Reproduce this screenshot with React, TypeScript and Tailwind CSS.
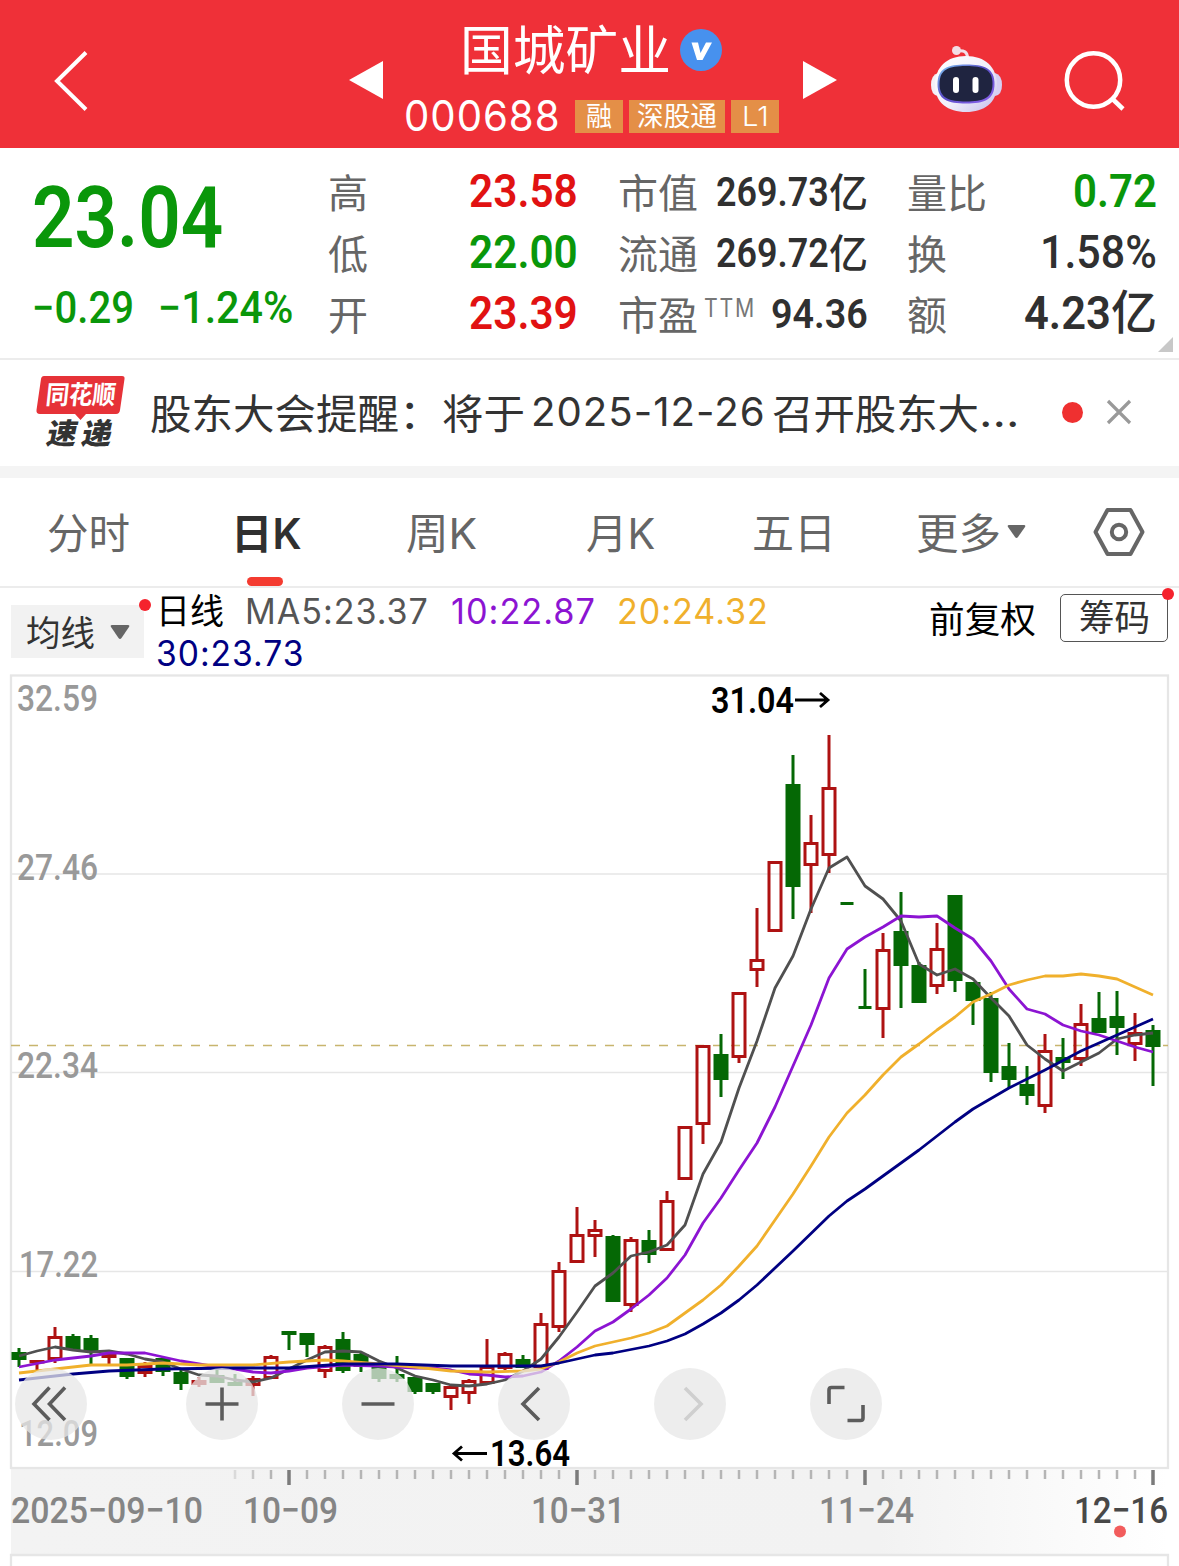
import { useLayoutEffect, useRef, type ReactNode } from "react";

const SANS = "font-[Inter,'Noto_Sans_CJK_SC',sans-serif]";
const DIN = "font-[Roboto,'Noto_Sans_CJK_SC',sans-serif]";

/* A single line of text condensed or widened to fill its box. */
function Fit({ className = "", children }: { className?: string; children: ReactNode }) {
  const box = useRef<HTMLDivElement>(null);
  const text = useRef<HTMLSpanElement>(null);
  useLayoutEffect(() => {
    const apply = () => {
      if (box.current && text.current) {
        text.current.style.transform = `scaleX(${box.current.clientWidth / text.current.offsetWidth})`;
      }
    };
    apply();
    document.fonts.ready.then(apply);
  }, []);
  return (
    <div ref={box} className={`shrink-0 whitespace-nowrap ${className}`}>
      <span ref={text} className="inline-block origin-left">{children}</span>
    </div>
  );
}

function Header() {
  return (
    <header className="flex h-[148px] bg-[#ef3038] text-white">
      <svg className="mt-[50px] ml-[53px] h-[62px] w-[36px]" viewBox="0 0 36 62" fill="none" stroke="currentColor" strokeWidth="4">
        <path d="M33 2.500L4 31L33 59.500" />
      </svg>
      <svg className="mt-[61px] ml-[260px] h-[38px] w-[34px]" viewBox="0 0 34 38" fill="currentColor">
        <path d="M34 0V38L0 19Z" />
      </svg>
      <div className="ml-[21px] w-[375px]">
        <div className="mt-[18px] ml-[56px] flex h-[64px] items-center">
          <Fit className={`w-[211px] pt-[2px] text-[53px] leading-[64px] ${SANS}`}>国城矿业</Fit>
          <svg className="ml-[9px] size-[42px]" viewBox="0 0 42 42">
            <circle cx="21" cy="21" r="21" fill="#4791ee" />
            <path d="M11.500 13.500H18L20.500 24L26 13.500H32L22.500 31H17Z" fill="#fff" />
          </svg>
        </div>
        <div className="mt-[12px] flex h-[44px] items-center">
          <Fit className={`w-[157px] text-[42px] leading-[44px] tracking-[1px] ${SANS}`}>000688</Fit>
          <div className={`mt-[1px] ml-[14px] flex gap-[6px] text-[27px] leading-[34px] ${SANS}`}>
            <div className="flex h-[33px] w-[48px] justify-center bg-[#e48f47]"><Fit className="w-[26px]">融</Fit></div>
            <div className="flex h-[33px] w-[96px] justify-center bg-[#e48f47]"><Fit className="w-[80px]">深股通</Fit></div>
            <div className="flex h-[33px] w-[48px] justify-center bg-[#e48f47]"><Fit className="w-[27px] font-light">L1</Fit></div>
          </div>
        </div>
      </div>
      <svg className="mt-[61px] ml-[24px] h-[38px] w-[34px]" viewBox="0 0 34 38" fill="currentColor">
        <path d="M0 0V38L34 19Z" />
      </svg>
      <svg className="mt-[44px] ml-[92px] h-[70px] w-[74px]" viewBox="0 0 74 70">
        <defs>
          <linearGradient id="shell" x1="0" y1="0" x2="1" y2="1">
            <stop offset="0" stopColor="#fff" />
            <stop offset=".55" stopColor="#f1effa" />
            <stop offset="1" stopColor="#c4bdec" />
          </linearGradient>
          <linearGradient id="rim" x1="0" y1="0" x2="1" y2="1">
            <stop offset="0" stopColor="#7fc9f5" />
            <stop offset=".45" stopColor="#5a4fc8" />
            <stop offset="1" stopColor="#8d62ee" />
          </linearGradient>
        </defs>
        <path d="M28 7Q38.500 5 38.500 14V19" fill="none" stroke="#f2dfe8" strokeWidth="3" />
        <circle cx="27.500" cy="6.500" r="4.500" fill="#f3dde5" />
        <path d="M9 29Q2 31 2 41Q2 51 9 52Z" fill="#f3f0f8" />
        <path d="M66 29Q73 31 73 41Q73 51 66 52Z" fill="#d6cff3" />
        <path d="M37 12C56 12 68 23 68 41C68 59 55 68 37 68C19 68 6 59 6 41C6 23 18 12 37 12Z" fill="url(#shell)" />
        <path d="M37 20.500C55 20.500 65.500 24 65.500 40C65.500 56 55 59.500 37 59.500C19 59.500 8.500 56 8.500 40C8.500 24 19 20.500 37 20.500Z" fill="url(#rim)" />
        <path d="M37 22C54 22 63.500 25 63.500 40C63.500 54 54 57.500 37 57.500C20 57.500 10.500 54 10.500 40C10.500 25 20 22 37 22Z" fill="#1f2440" />
        <rect x="24" y="33" width="6" height="16" rx="3" fill="#fff" />
        <rect x="43.500" y="33" width="6" height="16" rx="3" fill="#fff" />
      </svg>
      <svg className="mt-[49px] ml-[60px] h-[63px] w-[64px]" viewBox="0 0 64 63" fill="none" stroke="currentColor" strokeWidth="4.500">
        <circle cx="30.500" cy="31" r="26.700" />
        <path d="M48.500 49L60 60" />
      </svg>
    </header>
  );
}

function Label({ children, className }: { children: ReactNode; className: string }) {
  return <Fit className={`pt-[1.5px] text-[40px] leading-[61px] font-normal text-[#666] ${SANS} ${className}`}>{children}</Fit>;
}

function Quote() {
  return (
    <section className={`relative flex h-[212px] border-b-2 border-[#ececec] pt-[13px] ${DIN}`}>
      <div className="ml-[32px] w-[296px] text-[#0a970a]">
        <Fit className="mt-[8px] w-[191px] text-[85px] leading-[98px] font-semibold">23.04</Fit>
        <div className="mt-[15px] flex justify-between pr-[35px] text-[44px] leading-[52px] font-medium">
          <Fit className="w-[102px]">−0.29</Fit>
          <Fit className="w-[135px]">−1.24%</Fit>
        </div>
      </div>
      <div className="w-[250px] text-[47px] leading-[60px] font-semibold">
        <div className="flex h-[61px] justify-between"><Label className="w-[40px]">高</Label><Fit className="w-[109px] text-[#e11212]">23.58</Fit></div>
        <div className="flex h-[61px] justify-between"><Label className="w-[40px]">低</Label><Fit className="w-[109px] text-[#0a970a]">22.00</Fit></div>
        <div className="flex h-[61px] justify-between"><Label className="w-[40px]">开</Label><Fit className="w-[109px] text-[#e11212]">23.39</Fit></div>
      </div>
      <div className="ml-[40px] w-[250px] text-[40px] leading-[61px] font-semibold text-[#303030]">
        <div className="flex h-[61px] justify-between"><Label className="w-[80px]">市值</Label>
          <div className="flex pt-[1px]"><Fit className="w-[113px]">269.73</Fit><Fit className="w-[39px] pt-[1px] font-medium">亿</Fit></div></div>
        <div className="flex h-[61px] justify-between"><Label className="w-[80px]">流通</Label>
          <div className="flex pt-[1px]"><Fit className="w-[113px]">269.72</Fit><Fit className="w-[39px] pt-[1px] font-medium">亿</Fit></div></div>
        <div className="flex h-[61px]">
          <Label className="w-[80px]">市盈</Label>
          <Fit className={`ml-[6px] w-[52px] text-[25px] leading-[50px] font-normal tracking-[2px] text-[#777] ${SANS}`}>TTM</Fit>
          <Fit className="ml-[15px] w-[97px] pt-[1px]">94.36</Fit>
        </div>
      </div>
      <div className="ml-[39px] w-[250px] text-[47px] leading-[60px] font-semibold text-[#303030]">
        <div className="flex h-[61px] justify-between"><Label className="w-[80px]">量比</Label><Fit className="w-[84px] text-[#0a970a]">0.72</Fit></div>
        <div className="flex h-[61px] justify-between"><Label className="w-[40px]">换</Label><Fit className="w-[117px] font-medium">1.58%</Fit></div>
        <div className="flex h-[61px] justify-between"><Label className="w-[40px]">额</Label>
          <div className="flex"><Fit className="w-[87px]">4.23</Fit><Fit className="w-[46px] font-medium">亿</Fit></div></div>
      </div>
      <svg className="absolute right-[6px] bottom-[6px] size-[15px]" viewBox="0 0 15 15"><path d="M15 0V15H0Z" fill="#c8c8c8" /></svg>
    </section>
  );
}

function News() {
  return (
    <section className={`flex h-[118px] border-b-[12px] border-[#f4f4f4] text-[#333] ${SANS}`}>
      <div className="relative mt-[16px] ml-[36px] h-[74px] w-[90px]">
        <svg className="absolute inset-0" width="90" height="74" viewBox="0 0 90 74">
          <path d="M8 0H86Q89 0 88.500 3L84 34Q83.500 38 80 38H50L44.500 44L39 38H4Q0 38 .5 34L5 3Q5.500 0 8 0Z" fill="#e63238" />
        </svg>
        <div className="relative -skew-x-6 pt-[3px] pl-[10px] text-[26px] leading-[32px] font-bold text-white">
          <Fit className="w-[70px]">同花顺</Fit>
        </div>
        <div className="relative flex -skew-x-12 gap-[5px] pt-[7px] pl-[12px] text-[29px] leading-[32px] font-black">
          <Fit className="w-[30px]">速</Fit><Fit className="w-[30px]">递</Fit>
        </div>
      </div>
      <div className="mt-[22px] ml-[24px] flex text-[41px] leading-[64px]">
        <Fit className="w-[249px]">股东大会提醒</Fit>
        <Fit className="w-[43px]">：</Fit>
        <Fit className="w-[83px]">将于</Fit>
        <Fit className="-mt-[2px] ml-[6px] w-[235px] text-[40px] tracking-[1px]">2025-12-26</Fit>
        <Fit className="ml-[6px] w-[207px]">召开股东大</Fit>
        <Fit className="-mt-[2px] w-[40px]">...</Fit>
      </div>
      <div className="mt-[42px] ml-[43px] size-[21px] rounded-full bg-[#ef3030]" />
      <svg className="mt-[39px] ml-[23px] size-[26px]" viewBox="0 0 26 26" stroke="#999" strokeWidth="3.200">
        <path d="M2 2L24 24M24 2L2 24" />
      </svg>
    </section>
  );
}

function Tabs() {
  return (
    <nav className={`flex h-[110px] border-b-2 border-[#ececec] text-[42px] leading-[112px] text-[#666] ${SANS}`}>
      <Fit className="ml-[47px] w-[83px]">分时</Fit>
      <div className="relative ml-[101px] w-[70px] text-[#303030]">
        <Fit className="w-[71px] font-semibold">日K</Fit>
        <div className="absolute bottom-0 left-[16px] h-[9px] w-[36px] rounded-full bg-[#f43b30]" />
      </div>
      <Fit className="ml-[105px] w-[71px]">周K</Fit>
      <Fit className="ml-[109px] w-[69px]">月K</Fit>
      <Fit className="ml-[97px] w-[84px]">五日</Fit>
      <Fit className="ml-[80px] w-[85px]">更多</Fit>
      <svg className="mt-[46px] ml-[6px] h-[16px] w-[19px]" viewBox="0 0 19 16"><path d="M2 1H17Q19 1 18 3L11 13Q9.500 15 8 13L1 3Q0 1 2 1Z" fill="#666" /></svg>
      <svg className="mt-[28px] ml-[66px] h-[52px] w-[54px]" viewBox="0 0 54 52" fill="none" stroke="#666" strokeWidth="4" strokeLinejoin="round">
        <path d="M15.500 4H38.500L50.500 26L38.500 48H15.500L3.500 26Z" />
        <circle cx="27" cy="26" r="7.200" />
      </svg>
    </nav>
  );
}

function Legend() {
  return (
    <section className={`flex h-[86px] ${SANS}`}>
      <div className="relative mt-[17px] ml-[11px] flex h-[53px] w-[133px] bg-[#f2f2f2] text-[35px] leading-[56px] text-[#333]">
        <Fit className="ml-[15px] w-[69px]">均线</Fit>
        <svg className="mt-[20px] ml-[15px] h-[15px] w-[20px]" viewBox="0 0 20 15"><path d="M2 0H18Q20 0 19 2L11.500 13Q10 15 8.500 13L1 2Q0 0 2 0Z" fill="#666" /></svg>
        <div className="absolute -top-[6px] left-[128px] size-[12px] rounded-full bg-[#f5222d]" />
      </div>
      <div className="ml-[12px] w-[773px] text-[35px] leading-[42px] tracking-[1px]">
        <div className="mt-[2px] flex h-[42px]">
          <Fit className="w-[68px] tracking-normal text-black">日线</Fit>
          <Fit className="ml-[21px] w-[184px] text-[#555]">MA5:23.37</Fit>
          <Fit className="ml-[22px] w-[145px] text-[#8c14d2]">10:22.87</Fit>
          <Fit className="ml-[21px] w-[152px] text-[#f0b02c]">20:24.32</Fit>
        </div>
        <Fit className="w-[148px] text-[#000082]">30:23.73</Fit>
      </div>
      <Fit className="w-[107px] text-[36px] leading-[64px] text-black">前复权</Fit>
      <div className="relative mt-[6px] ml-[24px] flex h-[48px] w-[108px] justify-center rounded-[5px] border-[1.500px] border-[#555] text-[36px] leading-[47px] text-[#333]">
        <Fit className="w-[71px]">筹码</Fit>
        <div className="absolute -top-[7px] -right-[7px] size-[12px] rounded-full bg-[#f5222d]" />
      </div>
    </section>
  );
}

/* Daily candles 18px apart: direction, high, body top, body bottom, low. */
type Candle = ["u" | "d" | "f", number, number, number, number];
const CANDLES: Candle[] = [
  ["d", 1348, 1352, 1360, 1367], ["u", 1360, 1360, 1363, 1371], ["u", 1327, 1336, 1360, 1363], ["d", 1334, 1336, 1350, 1350],
  ["d", 1335, 1338, 1352, 1365], ["u", 1354, 1354, 1358, 1364], ["d", 1358, 1358, 1377, 1379], ["u", 1362, 1365, 1374, 1377],
  ["d", 1358, 1358, 1372, 1376], ["d", 1368, 1372, 1384, 1390], ["u", 1377, 1380, 1385, 1387], ["d", 1370, 1375, 1383, 1383],
  ["d", 1374, 1382, 1386, 1386], ["u", 1376, 1378, 1386, 1396], ["u", 1355, 1356, 1379, 1379], ["d", 1331, 1331, 1335, 1350],
  ["d", 1333, 1333, 1345, 1357], ["u", 1345, 1346, 1372, 1378], ["d", 1332, 1339, 1371, 1373], ["d", 1353, 1354, 1367, 1372],
  ["d", 1362, 1367, 1379, 1382], ["d", 1356, 1374, 1379, 1382], ["d", 1377, 1377, 1392, 1394], ["d", 1383, 1383, 1392, 1394],
  ["u", 1385, 1386, 1398, 1410], ["u", 1379, 1380, 1394, 1404], ["u", 1339, 1366, 1384, 1384], ["u", 1352, 1353, 1369, 1370],
  ["d", 1355, 1359, 1368, 1368], ["u", 1313, 1323, 1370, 1370], ["u", 1262, 1270, 1328, 1332], ["u", 1207, 1234, 1263, 1263],
  ["u", 1220, 1229, 1237, 1257], ["d", 1235, 1236, 1302, 1302], ["u", 1237, 1239, 1306, 1312], ["d", 1230, 1240, 1255, 1263],
  ["u", 1191, 1200, 1251, 1251], ["u", 1126, 1126, 1180, 1180], ["u", 1045, 1045, 1125, 1144], ["d", 1034, 1054, 1080, 1097],
  ["u", 992, 992, 1058, 1063], ["u", 908, 959, 971, 987], ["u", 861, 861, 932, 932], ["d", 755, 784, 887, 919],
  ["u", 815, 842, 866, 913], ["u", 735, 787, 856, 873], ["f", 902, 902, 905, 905], ["f", 969, 1006, 1009, 1009],
  ["u", 933, 949, 1010, 1038], ["d", 892, 931, 966, 1008], ["d", 962, 965, 1003, 1003], ["u", 923, 948, 987, 994],
  ["d", 895, 895, 981, 992], ["d", 982, 982, 1001, 1025], ["d", 992, 998, 1073, 1082], ["d", 1043, 1066, 1080, 1088],
  ["d", 1066, 1084, 1096, 1105], ["u", 1034, 1050, 1107, 1113], ["d", 1038, 1057, 1063, 1079], ["u", 1004, 1023, 1060, 1066],
  ["d", 992, 1018, 1033, 1033], ["d", 991, 1016, 1028, 1055], ["u", 1013, 1032, 1045, 1061], ["d", 1025, 1030, 1047, 1086],
];

const MA5 = "19,1356 37,1351 55,1347 73,1350 91,1352 109,1351 127,1354 145,1359 163,1362 181,1369 199,1375 217,1376 235,1380 253,1382 271,1378 289,1369 307,1360 325,1352 343,1351 361,1352 379,1361 397,1368 415,1376 433,1380 451,1385 469,1386 487,1384 505,1380 523,1371 541,1359 559,1337 577,1312 595,1286 613,1273 631,1256 649,1252 667,1245 685,1225 703,1174 721,1142 739,1088 757,1041 775,988 793,956 811,909 829,868 847,857 865,886 883,899 901,921 919,964 937,975 955,969 973,979 991,998 1009,1016 1027,1045 1045,1059 1063,1071 1081,1062 1099,1053 1117,1039 1135,1035 1153,1033";
const MA10 = "19,1367 55,1360 91,1356 109,1353 145,1353 181,1361 217,1367 235,1369 253,1372 271,1373 289,1371 307,1368 343,1365 379,1366 415,1368 433,1368 451,1370 469,1374 487,1375 505,1377 523,1376 541,1372 559,1361 577,1347 595,1331 613,1322 631,1309 649,1295 667,1278 685,1255 703,1223 721,1198 739,1170 757,1143 775,1107 793,1066 811,1025 829,978 847,949 865,937 883,927 901,916 919,917 937,916 955,928 973,939 991,961 1009,989 1027,1009 1045,1014 1063,1025 1081,1031 1099,1035 1117,1041 1135,1047 1153,1052";
const MA20 = "19,1373 55,1369 91,1365 127,1365 163,1363 199,1365 253,1365 289,1362 325,1360 343,1361 379,1364 415,1367 451,1371 487,1372 523,1371 541,1369 559,1362 577,1353 595,1346 613,1342 631,1338 649,1333 667,1326 685,1313 703,1300 721,1285 739,1266 757,1246 775,1220 793,1194 811,1166 829,1137 847,1113 865,1095 883,1075 901,1057 919,1044 937,1030 955,1017 973,1002 991,994 1009,985 1027,980 1045,976 1063,976 1081,974 1099,976 1117,979 1135,987 1153,995";
const MA30 = "19,1380 73,1374 109,1371 163,1369 235,1368 289,1368 343,1364 397,1364 451,1366 541,1366 559,1363 595,1355 613,1353 649,1346 667,1341 685,1334 703,1324 721,1313 739,1300 757,1285 793,1251 829,1216 847,1201 865,1189 883,1176 919,1150 955,1122 973,1109 1009,1088 1045,1070 1081,1051 1117,1035 1135,1027 1153,1019";

const PRICES: [string, number, number, number][] = [
  ["32.59", 17, 711, 81], ["27.46", 17, 880, 81], ["22.34", 17, 1078, 81], ["17.22", 19, 1277, 79], ["12.09", 19, 1446, 79],
];
const DATES: [string, number, number, string][] = [
  ["2025−09−10", 11, 192, "#858585"], ["10−09", 243, 95, "#858585"], ["10−31", 531, 94, "#858585"],
  ["11−24", 819, 95, "#858585"], ["12−16", 1074, 94, "#484848"],
];

function Chart() {
  return (
    <svg className={`block h-[893px] w-[1179px] ${DIN}`} viewBox="0 673 1179 893">
      <defs>
        <linearGradient id="axis" x1="0" x2="1" y1="0" y2="0">
          <stop offset="0" stopColor="#f3f3f3" />
          <stop offset=".75" stopColor="#f2f2f2" />
          <stop offset="1" stopColor="#fff" />
        </linearGradient>
      </defs>
      <rect x="11" y="1469" width="1157" height="85" fill="url(#axis)" />
      <g fill="none" stroke="#e6e6e6" strokeWidth="2.300">
        <rect x="11" y="675.500" width="1157" height="792.500" />
        <path d="M11 1566V1555H1168V1566" />
        <path d="M11 874H1168M11 1072.500H1168M11 1271.500H1168" strokeWidth="1.500" />
      </g>
      <path d="M11 1045.500H1168" stroke="#c8b56e" strokeWidth="1.500" strokeDasharray="9 9" />
      <g fontSize="37" fontWeight="500" fill="#999">
        {PRICES.map(([t, x, y, w]) => <text key={t} x={x} y={y} textLength={w} lengthAdjust="spacingAndGlyphs">{t}</text>)}
      </g>
      {CANDLES.map(([dir, high, top, bottom, low], i) => {
        const x = 19 + i * 18;
        if (dir === "u") {
          return (
            <g key={i} stroke="#ae1212" strokeWidth="3" fill="none">
              <path d={`M${x} ${high}V${top + 1}M${x} ${bottom - 1}V${low}`} />
              <rect x={x - 6} y={top + 1.5} width="12" height={Math.max(bottom - top - 3, 0.5)} />
            </g>
          );
        }
        const half = dir === "f" ? 6.5 : 7.5;
        return (
          <g key={i} fill="#056805">
            <rect x={x - 1.5} y={high} width="3" height={low - high} />
            <rect x={x - half} y={top} width={half * 2} height={bottom - top} />
          </g>
        );
      })}
      <g fill="none" strokeWidth="2.800" strokeLinejoin="round">
        <polyline points={MA5} stroke="#505050" />
        <polyline points={MA10} stroke="#8c14d2" />
        <polyline points={MA20} stroke="#f0b02c" />
        <polyline points={MA30} stroke="#000082" />
      </g>
      <g fontSize="36" fontWeight="600" fill="#000">
        <text x="711" y="713" textLength="83" lengthAdjust="spacingAndGlyphs">31.04</text>
        <text x="490" y="1466" textLength="80" lengthAdjust="spacingAndGlyphs">13.64</text>
      </g>
      <g fill="none" stroke="#000" strokeWidth="2.800">
        <path d="M795 700H828M820 693L828 700L820 707" />
        <path d="M487 1453.500H454M462 1446.500L454 1453.500L462 1460.500" />
      </g>
      <g stroke="#b5b5b5" strokeWidth="2.500">
        {Array.from({ length: 52 }, (_, k) => {
          const x = 235 + k * 18;
          const major = (x - 289) % 288 === 0;
          return (
            <path key={k} d={major ? `M${x} 1470V1485` : `M${x} 1470V1479`} stroke={major ? "#7b7b7b" : "#b5b5b5"} strokeWidth={major ? 3.5 : 2.5} opacity={k < 2 ? 0.4 + k * 0.3 : 1} />
          );
        })}
      </g>
      <g fontSize="37" fontWeight="500">
        {DATES.map(([t, x, w, c]) => <text key={t} x={x} y={1523} fill={c} textLength={w} lengthAdjust="spacingAndGlyphs">{t}</text>)}
      </g>
      <circle cx="1120" cy="1531.500" r="6" fill="#f25c5c" />
    </svg>
  );
}

const CONTROLS = [
  "M34.500 19.500L19 36L34.500 52M50 19.500L34.500 36L50 52",
  "M19.500 36H52.500M36 19.500V52.500",
  "M19.500 36H52.500",
  "M41 20L25 36L41 52",
  "M31 20L47 36L31 52",
  "M19 36V22Q19 19.500 21.500 19.500H34.500M53 37V50Q53 52.500 50.500 52.500H37.500",
];

function Controls() {
  return (
    <div className="absolute top-[695px] left-[15px] flex gap-[84px]">
      {CONTROLS.map((d, i) => (
        <button key={i} className={`size-[72px] rounded-full bg-[#e7e7e7]/75 ${i === 0 ? "mr-[15px]" : ""} ${i === 4 ? "text-[#cfcfcf]" : "text-[#5c5c5c]"}`}>
          <svg width="72" height="72" viewBox="0 0 72 72" fill="none" stroke="currentColor" strokeWidth="3.600"><path d={d} /></svg>
        </button>
      ))}
    </div>
  );
}

export default function App() {
  return (
    <main className="h-[1566px] w-[1179px] overflow-hidden bg-white">
      <Header />
      <Quote />
      <News />
      <Tabs />
      <Legend />
      <section className="relative -mt-px">
        <Chart />
        <Controls />
      </section>
    </main>
  );
}
